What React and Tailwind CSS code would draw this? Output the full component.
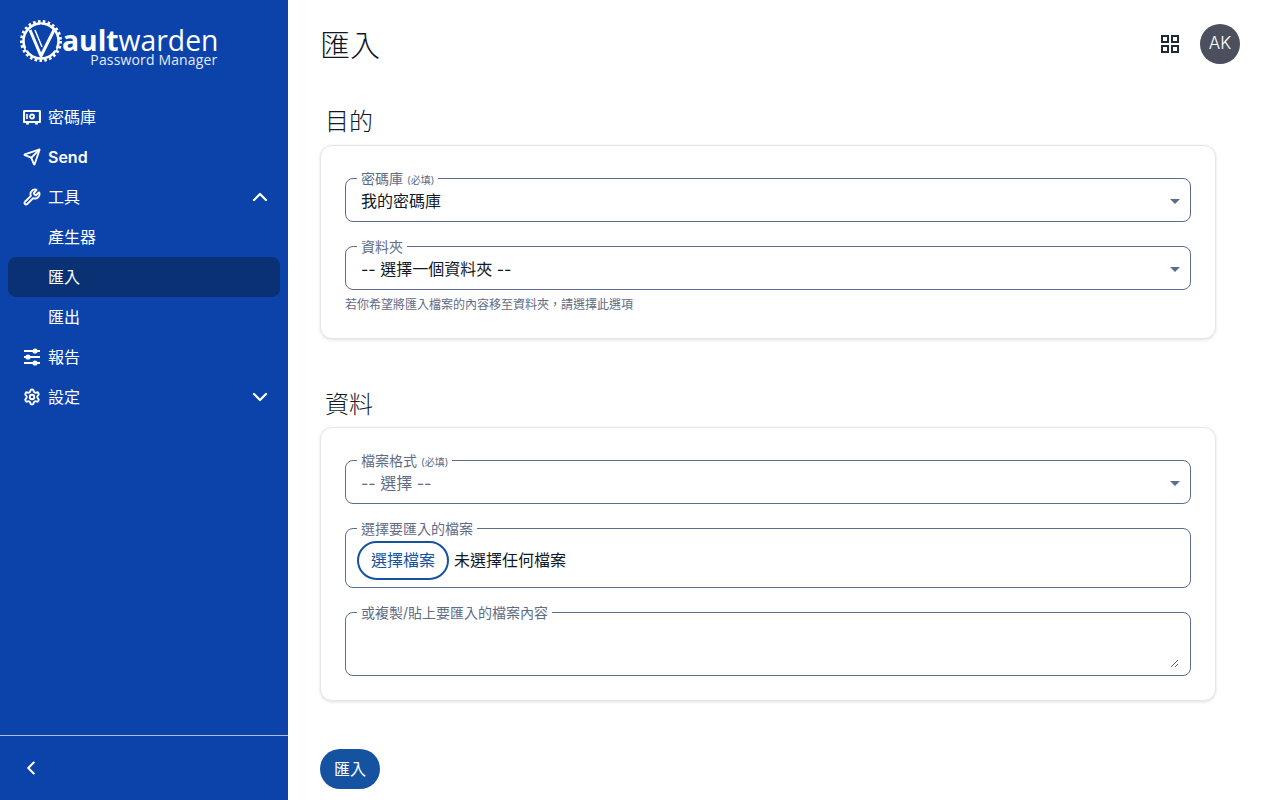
import React from 'react';
import { ChevronDown, ChevronLeft, ChevronUp, Send, Settings, Wrench } from 'lucide-react';

const GearLogo = () => (
  <svg width="44" height="44" viewBox="0 0 44 44" fill="none" className="shrink-0">
    <circle cx="22" cy="22" r="17.5" stroke="white" strokeWidth="2.5" />
    <circle cx="22" cy="22" r="19.5" stroke="white" strokeWidth="3" strokeDasharray="2.6 2.3" />
    <path d="M11 11 L22 37 L36 9" stroke="white" strokeWidth="3" strokeLinejoin="round" />
    <path d="M16 11 L23 28" stroke="white" strokeWidth="1.5" />
    <circle cx="22" cy="7" r="1.4" fill="#0c43ab" />
    <circle cx="8" cy="30" r="1.4" fill="#0c43ab" />
    <circle cx="36" cy="30" r="1.4" fill="#0c43ab" />
  </svg>
);

const VaultIcon = () => (
  <svg width="18" height="18" viewBox="0 0 18 18" fill="none" stroke="white" strokeWidth="2.2">
    <rect x="1" y="3" width="16" height="11" rx="0.5" />
    <circle cx="9" cy="8.5" r="2" strokeWidth="1.8" />
    <path d="M4 6v5" strokeWidth="1.6" />
    <path d="M3 15.5h3M12 15.5h3" strokeWidth="1.8" />
  </svg>
);

const SlidersIcon = () => (
  <svg width="18" height="18" viewBox="0 0 18 18" fill="white" stroke="white" strokeWidth="2">
    <path d="M1 3h16M1 9h16M1 15h16" />
    <circle cx="12" cy="3" r="1.6" />
    <circle cx="5" cy="9" r="1.6" />
    <circle cx="12" cy="15" r="1.6" />
  </svg>
);

const GridIcon = () => (
  <svg width="18" height="18" viewBox="0 0 18 18" fill="none" stroke="#1f2937" strokeWidth="2">
    <rect x="1" y="1" width="6" height="6" />
    <rect x="11" y="1" width="6" height="6" />
    <rect x="1" y="11" width="6" height="6" />
    <rect x="11" y="11" width="6" height="6" />
  </svg>
);

const NavItem = ({ icon, label, bold, chevron, active }) => (
  <div className={`mx-2 h-10 flex items-center rounded-lg px-4 text-white ${active ? 'bg-[#0a3174]' : ''}`}>
    <span className="w-6 shrink-0 flex items-center -ml-[1px] mr-[1px]">{icon}</span>
    <span className={`flex-1 text-base ${bold ? 'font-semibold' : ''}`}>{label}</span>
    {chevron === 'up' && <ChevronUp size={24} strokeWidth={2.25} className="-mr-2" />}
    {chevron === 'down' && <ChevronDown size={24} strokeWidth={2.25} className="-mr-2" />}
  </div>
);

const Sidebar = () => (
  <aside className="w-[288px] h-screen shrink-0 bg-[#0c43ab] flex flex-col">
    <div className="h-[97px] pl-[19px] pt-[19px] flex items-start">
      <GearLogo />
      <div className="flex flex-col items-end font-['Open_Sans',sans-serif] text-white -ml-[1px]">
        <div className="text-[28.3px] leading-[30px] mt-[6px]">
          <span className="font-bold">ault</span>warden
        </div>
        <div className="text-[14px] leading-[10px] mr-[1px] tracking-[0.15px] text-[#e3eaf8]">Password Manager</div>
      </div>
    </div>
    <nav className="flex-1">
      <NavItem icon={<VaultIcon />} label="密碼庫" />
      <NavItem icon={<Send size={18} strokeWidth={2.5} />} label="Send" bold />
      <NavItem icon={<Wrench size={18} strokeWidth={2.5} />} label="工具" chevron="up" />
      <NavItem label="產生器" />
      <NavItem label="匯入" active />
      <NavItem label="匯出" />
      <NavItem icon={<SlidersIcon />} label="報告" />
      <NavItem icon={<Settings size={18} strokeWidth={2.5} />} label="設定" chevron="down" />
    </nav>
    <div className="h-[65px] border-t border-[#a9bfe6] flex items-center pl-5">
      <ChevronLeft size={22} strokeWidth={2.25} className="text-white" />
    </div>
  </aside>
);

const Field = ({ label, required, children }) => (
  <fieldset className="border border-[#5a6d91] rounded-lg">
    <legend className="ml-[11px] px-1 h-4 text-sm leading-[18px] text-[#5f6c86]">
      {label}
      {required && <span className="ml-1 text-[10px]">(必填)</span>}
    </legend>
    {children}
  </fieldset>
);

const SelectField = ({ label, required, value, muted }) => (
  <Field label={label} required={required}>
    <div className="flex items-center pl-[15px] pr-[10px] pt-[3px] pb-2">
      <select
        defaultValue={value}
        className={`flex-1 h-6 appearance-none bg-transparent outline-none text-base ${muted ? 'text-[#5f6c86]' : 'text-[#111827]'}`}
      >
        <option>{value}</option>
      </select>
      <svg width="10" height="5" viewBox="0 0 10 5" fill="#5a6d91" className="mt-[1px]">
        <path d="M0 0h10L5 5z" />
      </svg>
    </div>
  </Field>
);

const Card = ({ children }) => (
  <div className="bg-white border border-[#e5e7eb] rounded-xl shadow-[0_1px_3px_rgba(30,41,80,0.14)] p-6">
    {children}
  </div>
);

export default function App() {
  return (
    <div className="flex h-screen overflow-hidden bg-white text-[#111827] font-['Inter','Noto_Sans_CJK_TC',sans-serif]">
      <Sidebar />
      <main className="flex-1 pl-8 pr-10 pt-6 overflow-hidden">
        <header className="h-10 flex items-center justify-between">
          <h1 className="pt-[2px] text-[30px] leading-10 font-light">匯入</h1>
          <div className="flex items-center gap-[21px]">
            <GridIcon />
            <div className="w-10 h-10 rounded-full bg-[#4b4f5e] text-white flex items-center justify-center text-[17px] font-light">AK</div>
          </div>
        </header>

        <div className="w-[896px]">
          <h2 className="mt-[42px] mb-[7px] pl-[5px] text-2xl leading-8 font-light">目的</h2>
          <Card>
            <div className="flex flex-col gap-4">
              <SelectField label="密碼庫" required value="我的密碼庫" />
              <div className="pb-[1px]">
                <SelectField label="資料夾" value="-- 選擇一個資料夾 --" />
                <p className="mt-[7px] text-xs leading-4 text-[#5f6c86]">若你希望將匯入檔案的內容移至資料夾，請選擇此選項</p>
              </div>
            </div>
          </Card>

          <h2 className="mt-[50px] mb-[6px] pl-[5px] text-2xl leading-8 font-light">資料</h2>
          <Card>
            <div className="flex flex-col gap-4">
              <SelectField label="檔案格式" required value="-- 選擇 --" muted />
              <Field label="選擇要匯入的檔案">
                <div className="flex items-center gap-[5px] pl-[11px] pt-[5px] pb-[7px]">
                  <button className="h-[39px] w-[92px] pb-[2px] rounded-full border-2 border-[#1553a0] text-[#1553a0] text-base">選擇檔案</button>
                  <span className="pb-[2px] text-base">未選擇任何檔案</span>
                </div>
              </Field>
              <Field label="或複製/貼上要匯入的檔案內容">
                <div className="pl-[15px] pr-[11px] pb-[7px]">
                  <textarea className="block w-full h-[48px] outline-none bg-transparent text-base" />
                </div>
              </Field>
            </div>
          </Card>

          <button className="mt-12 h-10 w-[60px] rounded-full bg-[#1553a0] text-white text-base">匯入</button>
        </div>
      </main>
    </div>
  );
}
